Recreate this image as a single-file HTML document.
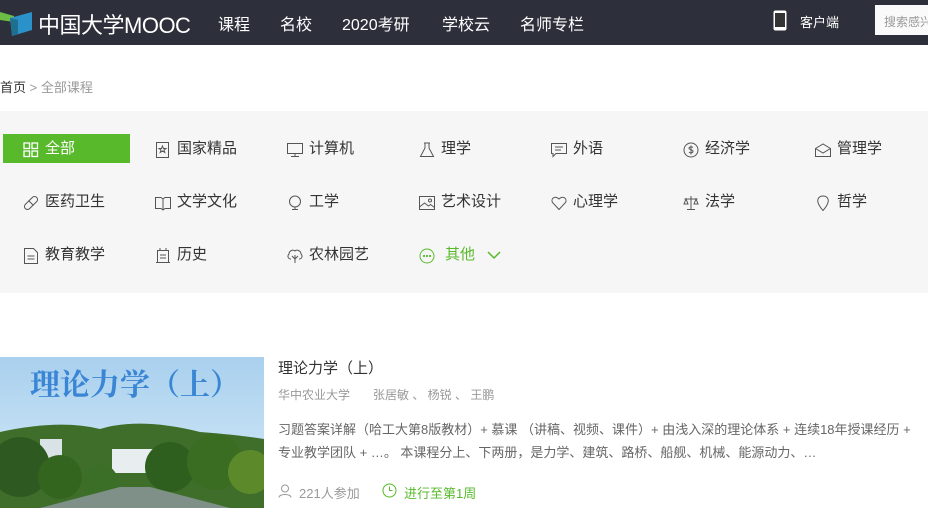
<!DOCTYPE html>
<html><head><meta charset="utf-8"><style>
*{margin:0;padding:0;box-sizing:border-box}
body{width:928px;height:519px;overflow:hidden;background:#fff;font-family:"Liberation Sans","Noto Sans CJK SC",sans-serif;position:relative}
.hd{position:absolute;left:0;top:0;width:928px;height:45px;background:#2d303b;color:#fff}
.hd .n{position:absolute;top:11px;font-size:16px}
.crumb{position:absolute;left:0;top:77px;font-size:13px;color:#999}
.crumb b{font-weight:normal;color:#333}
.band{position:absolute;left:0;top:111px;width:928px;height:182px;background:#f6f6f6}
.it{position:absolute;font-size:15px;color:#333;height:20px;line-height:20px}
.it svg{position:absolute;left:-22px;top:3px}
.act{position:absolute;left:3px;top:134px;width:127px;height:29px;background:#58b92b}
.t{position:absolute;font-size:12px;color:#666;white-space:nowrap}
</style></head><body>
<div class="hd">
 <svg style="position:absolute;left:0;top:8px" width="36" height="28"><path d="M0 4 L14 8 L14 14 L0 12Z" fill="#6cbd45"/><path d="M10 10 L32 4 L32 22 L12 28Z" fill="#2a92c9"/><path d="M10 10 L18 12 L18 26 L12 28Z" fill="#1f6f8f"/></svg>
 <div class="n" style="left:38px;top:8px;font-size:22px;letter-spacing:-0.5px">中国大学MOOC</div>
 <div class="n" style="left:218px">课程</div>
 <div class="n" style="left:280px">名校</div>
 <div class="n" style="left:342px">2020考研</div>
 <div class="n" style="left:442px">学校云</div>
 <div class="n" style="left:520px">名师专栏</div>
 <svg style="position:absolute;left:773px;top:10px" width="14" height="21"><rect x="0.5" y="0.5" width="13" height="20" rx="2" fill="#fff"/><rect x="2" y="3" width="10" height="14" fill="#333"/></svg>
 <div class="n" style="left:800px;top:12px;font-size:13px">客户端</div>
 <div style="position:absolute;left:875px;top:5px;width:60px;height:30px;background:#fafafa;color:#999;font-size:12px;padding:8px 0 0 9px">搜索感兴</div>
</div>
<div class="crumb"><b>首页</b> &gt; 全部课程</div>
<div class="band"></div>
<div class="act"></div>
<div class="it" style="left:45px;top:139px;color:#fff"><svg width="16" height="16" fill="none" stroke="#fff" stroke-width="1.3"><rect x="1" y="1" width="5.5" height="5.5"/><rect x="9" y="1" width="5.5" height="5.5"/><rect x="1" y="9" width="5.5" height="5.5"/><rect x="9" y="9" width="5.5" height="5.5"/></svg>全部</div>
<div class="it" style="left:177px;top:139px"><svg width="16" height="16" fill="none" stroke="#555"><rect x="1.5" y="0.5" width="12" height="15"/><path d="M7.5 4l1 2.5h2.5l-2 1.5.8 2.5-2.3-1.5-2.3 1.5.8-2.5-2-1.5h2.5z"/></svg>国家精品</div>
<div class="it" style="left:309px;top:139px"><svg width="16" height="16" fill="none" stroke="#555"><rect x="0.5" y="1.5" width="15" height="10"/><path d="M8 11.5v3M4 14.5h8"/></svg>计算机</div>
<div class="it" style="left:441px;top:139px"><svg width="16" height="16" fill="none" stroke="#555"><path d="M5 1h6M6 1v5L1.5 14.5h13L10 6V1"/></svg>理学</div>
<div class="it" style="left:573px;top:139px"><svg width="16" height="16" fill="none" stroke="#555"><path d="M0.5 1.5h15v10H5l-3 3v-3H0.5z M4 5h8M4 8h6"/></svg>外语</div>
<div class="it" style="left:705px;top:139px"><svg width="16" height="16" fill="none" stroke="#555"><circle cx="8" cy="8" r="7"/><path d="M10 5.5c-1-1-4-1-4 .8s4 1 4 3-3 1.8-4 .8M8 3.5v9"/></svg>经济学</div>
<div class="it" style="left:837px;top:139px"><svg width="16" height="16" fill="none" stroke="#555"><path d="M0.5 6.5L8 2l7.5 4.5v8h-15z M0.5 6.5L8 11l7.5-4.5"/></svg>管理学</div>
<div class="it" style="left:45px;top:192px"><svg width="16" height="16" fill="none" stroke="#555"><rect x="0" y="5" width="16" height="6" rx="3" transform="rotate(-45 8 8)"/><path d="M5.5 5.5l5 5"/></svg>医药卫生</div>
<div class="it" style="left:177px;top:192px"><svg width="16" height="16" fill="none" stroke="#555"><path d="M0.5 2.5h5.5l2 1.5 2-1.5h5.5v11H10l-2 1.5-2-1.5H0.5z M8 4v11"/></svg>文学文化</div>
<div class="it" style="left:309px;top:192px"><svg width="16" height="16" fill="none" stroke="#555"><circle cx="8" cy="6.5" r="5.5"/><path d="M5 14.5h6M8 12v2.5"/></svg>工学</div>
<div class="it" style="left:441px;top:192px"><svg width="16" height="16" fill="none" stroke="#555"><rect x="0.5" y="1.5" width="15" height="13"/><path d="M0.5 12l5-4 4 3 2-1.5 4 3"/><circle cx="11" cy="5.5" r="1.5"/></svg>艺术设计</div>
<div class="it" style="left:573px;top:192px"><svg width="16" height="16" fill="none" stroke="#555"><path d="M8 14.5L1.5 7.5C-.5 4 3.5 0 8 4c4.5-4 8.5 0 6.5 3.5z"/></svg>心理学</div>
<div class="it" style="left:705px;top:192px"><svg width="16" height="16" fill="none" stroke="#555"><path d="M8 1v13M4 14.5h8M1.5 4h13M3 4L1 9h4zM13 4l-2 5h4z"/></svg>法学</div>
<div class="it" style="left:837px;top:192px"><svg width="16" height="16" fill="none" stroke="#555"><path d="M8 1c-4 0-6 3-5 6.5s5 8 5 8 4-4.5 5-8S12 1 8 1z"/></svg>哲学</div>
<div class="it" style="left:45px;top:245px"><svg width="16" height="16" fill="none" stroke="#555"><path d="M1.5 0.5h9l4 4v11h-13z M4.5 8h7M4.5 11h7"/></svg>教育教学</div>
<div class="it" style="left:177px;top:245px"><svg width="16" height="16" fill="none" stroke="#555"><path d="M2.5 2.5h11v12h-11z M5 0v2.5M11 0v2.5 M5 7h6M5 10h6M1 14.5h14"/></svg>历史</div>
<div class="it" style="left:309px;top:245px"><svg width="16" height="16" fill="none" stroke="#555"><path d="M8 15V7M5 8l3 3 3-3M4 11c-3 0-4-3-2-5 0-3 4-5 6-3 2-2 6 0 6 3 2 2 1 5-2 5"/></svg>农林园艺</div>
<div class="it" style="left:445px;top:245px;color:#58b92b"><svg style="left:-26px" width="16" height="16" fill="none" stroke="#58b92b"><circle cx="8" cy="8" r="7"/><circle cx="5" cy="8" r=".6"/><circle cx="8" cy="8" r=".6"/><circle cx="11" cy="8" r=".6"/></svg>其他<svg style="left:42px;top:5px" width="14" height="10" fill="none" stroke="#58b92b" stroke-width="1.5"><path d="M1 2l6 6 6-6"/></svg></div>

<svg style="position:absolute;left:0;top:357px" width="264" height="151">
<defs><linearGradient id="s" x1="0" y1="0" x2="0" y2="1"><stop offset="0" stop-color="#a9d0ee"/><stop offset="1" stop-color="#d8ecf8"/></linearGradient></defs>
<rect width="264" height="151" fill="url(#s)"/>
<path d="M0 75 Q60 62 100 72 Q140 60 200 75 Q240 78 264 82 V151 H0Z" fill="#3f6e2a"/>
<rect x="112" y="92" width="42" height="24" fill="#e8eef0"/>
<rect x="40" y="82" width="22" height="30" fill="#d9e2e6"/>
<circle cx="20" cy="110" r="30" fill="#2e5a21"/>
<circle cx="60" cy="120" r="22" fill="#34651f"/>
<circle cx="100" cy="125" r="18" fill="#3b6f27"/>
<circle cx="170" cy="110" r="25" fill="#2f5f1f"/>
<circle cx="215" cy="105" r="28" fill="#3a6c22"/>
<circle cx="250" cy="115" r="22" fill="#5c8a2a"/>
<path d="M40 151 L120 130 H150 L230 151Z" fill="#7f9088"/>
<text x="30" y="38" font-family="Noto Serif CJK SC,serif" font-weight="bold" font-size="30" fill="#3a86d4">理论力学（上）</text>
</svg>
<div style="position:absolute;left:278px;top:357px;font-size:15px;color:#333">理论力学（上）</div>
<div class="t" style="left:278px;top:386px;color:#999">华中农业大学</div>
<div class="t" style="left:373px;top:386px;color:#999">张居敏 、 杨锐 、 王鹏</div>
<div class="t" style="left:278px;top:418px;font-size:13px;line-height:23px">习题答案详解（哈工大第8版教材）+ 慕课 （讲稿、视频、课件）+ 由浅入深的理论体系 + 连续18年授课经历 +<br>专业教学团队 + …。 本课程分上、下两册，是力学、建筑、路桥、船舰、机械、能源动力、…</div>
<svg style="position:absolute;left:278px;top:484px" width="14" height="14" fill="none" stroke="#999"><circle cx="7" cy="4.5" r="3.5"/><path d="M1 13.5c0-4 12-4 12 0"/></svg>
<div class="t" style="left:299px;top:483px;color:#999;font-size:13px">221人参加</div>
<svg style="position:absolute;left:382px;top:483px" width="15" height="15" fill="none" stroke="#58b92b"><circle cx="7.5" cy="7.5" r="6.5"/><path d="M7.5 3.5v4h3"/></svg>
<div class="t" style="left:404px;top:483px;color:#58b92b;font-size:13px">进行至第1周</div>
</body></html>
